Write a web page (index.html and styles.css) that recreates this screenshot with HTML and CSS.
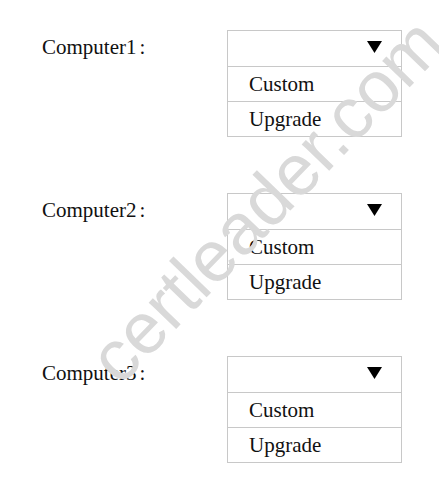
FILE: index.html
```html
<!DOCTYPE html>
<html>
<head>
<meta charset="utf-8">
<link rel="stylesheet" href="styles.css">
</head>
<body>
<div class="page">
  <div class="group">
    <div class="label">Computer1<span class="colon">:</span></div>
    <div class="select">
      <div class="row head"><svg class="arrow" width="15" height="12" viewBox="0 0 15 12"><polygon points="0,0 15,0 7.5,12" fill="#000"/></svg></div>
      <div class="row opt">Custom</div>
      <div class="row opt">Upgrade</div>
    </div>
  </div>
  <div class="group">
    <div class="label">Computer2<span class="colon">:</span></div>
    <div class="select">
      <div class="row head"><svg class="arrow" width="15" height="12" viewBox="0 0 15 12"><polygon points="0,0 15,0 7.5,12" fill="#000"/></svg></div>
      <div class="row opt">Custom</div>
      <div class="row opt">Upgrade</div>
    </div>
  </div>
  <div class="group">
    <div class="label">Computer3<span class="colon">:</span></div>
    <div class="select">
      <div class="row head"><svg class="arrow" width="15" height="12" viewBox="0 0 15 12"><polygon points="0,0 15,0 7.5,12" fill="#000"/></svg></div>
      <div class="row opt">Custom</div>
      <div class="row opt">Upgrade</div>
    </div>
  </div>
  <div class="watermark">certleader.com</div>
</div>
</body>
</html>
```
FILE: styles.css
```css
html, body {
  margin: 0;
  padding: 0;
  background: #fff;
}
.page {
  position: relative;
  width: 439px;
  height: 491px;
  overflow: hidden;
  padding-top: 30px;
  box-sizing: border-box;
  display: flex;
  flex-direction: column;
  gap: 56px;
  font-family: "Liberation Serif", "Times New Roman", serif;
  font-size: 21px;
  color: #111;
}
.group {
  display: flex;
  align-items: flex-start;
  padding-left: 42px;
}
.label {
  width: 185px;
  line-height: 35px;
}
.colon {
  margin-left: 3px;
}
.select {
  width: 175px;
  border: 1px solid #c8c8c8;
  box-sizing: border-box;
}
.row {
  height: 35px;
  line-height: 35px;
  box-sizing: border-box;
}
.row + .row {
  border-top: 1px solid #c8c8c8;
}
.head {
  display: flex;
  justify-content: flex-end;
  align-items: flex-start;
  padding-right: 19px;
  padding-top: 10px;
}
.arrow {
  display: block;
}
.opt {
  padding-left: 21px;
  line-height: 34px;
}
.watermark {
  position: absolute;
  left: 266px;
  top: 200px;
  transform: translate(-50%, -50%) rotate(-46deg);
  font-family: "Liberation Sans", Arial, sans-serif;
  font-size: 72px;
  color: #d9d9d9;
  white-space: nowrap;
  line-height: 1;
}
```
